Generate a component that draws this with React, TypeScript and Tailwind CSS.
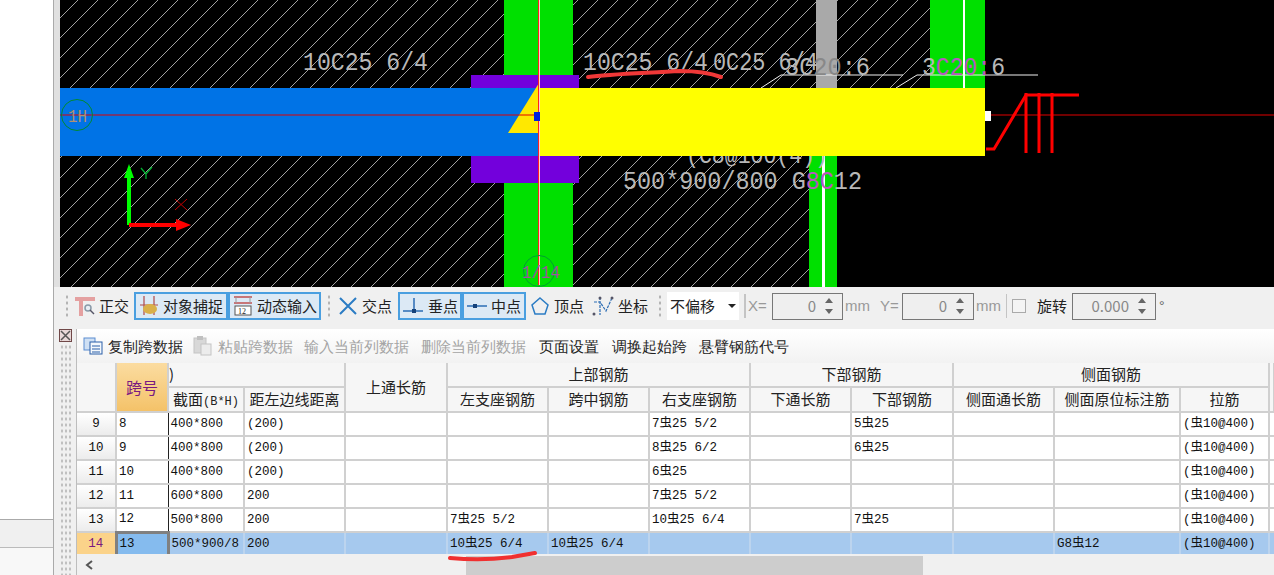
const cad = "'Liberation Mono', monospace"

const rows = [
    ['9', '8', '400*800', '(200)', '', '', '', '7虫25 5/2', '', '5虫25', '', '', '(虫10@400)'],
    ['10', '9', '400*800', '(200)', '', '', '', '8虫25 6/2', '', '6虫25', '', '', '(虫10@400)'],
    ['11', '10', '400*800', '(200)', '', '', '', '6虫25', '', '', '', '', '(虫10@400)'],
    ['12', '11', '600*800', '200', '', '', '', '7虫25 5/2', '', '', '', '', '(虫10@400)'],
    ['13', '12', '500*800', '200', '', '7虫25 5/2', '', '10虫25 6/4', '', '7虫25', '', '', '(虫10@400)'],
    ['14', '13', '500*900/8', '200', '', '10虫25 6/4', '10虫25 6/4', '', '', '', '', 'G8虫12', '(虫10@400)'],
]

const widths = ['w-[39px]', 'w-[52px]', 'w-[76px]', 'w-[101px]', 'w-[102px]', 'w-[101px]', 'w-[101px]', 'w-[101px]', 'w-[101px]', 'w-[102px]', 'w-[101px]', 'w-[126px]', 'w-[89px]', 'w-[5px]']

const CadText = ({ x, y, len, fill = '#b8b8b8', size = 26, children }: { x: number; y: number; len: number; fill?: string; size?: number; children: React.ReactNode }) => (
    <text x={x} y={y} textLength={len} lengthAdjust="spacingAndGlyphs" fill={fill} fontSize={size} fontFamily={cad}>
        {children}
    </text>
)

const Drawing = () => (
    <svg viewBox="60 0 1214 287" width={1214} height={287} className="block">
        <defs>
            <pattern id="hatch" width="20" height="20" patternUnits="userSpaceOnUse" patternTransform="translate(18 0)">
                <path d="M-1 21 L21 -1" stroke="#a0a0a0" strokeWidth="1" />
            </pattern>
        </defs>
        <rect x="60" y="0" width="1214" height="287" fill="#000" />
        <rect x="60" y="0" width="870" height="88" fill="url(#hatch)" />
        <rect x="60" y="156" width="749" height="131" fill="url(#hatch)" />

        {/* columns */}
        <rect x="504" y="0" width="69" height="287" fill="#00e000" />
        <rect x="816" y="0" width="21" height="88" fill="#a9a9a9" />
        <rect x="809" y="156" width="28" height="131" fill="#00e000" />
        <rect x="822" y="156" width="3" height="131" fill="#fff" />
        <rect x="930" y="0" width="55" height="88" fill="#00e000" />
        <rect x="963" y="0" width="2" height="88" fill="#fff" />
        <rect x="471" y="75" width="108" height="108" fill="#7300dc" />

        {/* beams */}
        <rect x="60" y="88" width="480" height="68" fill="#0073e6" />
        <path d="M539 83 L508 133 L540 133 Z" fill="#ffe800" />
        <rect x="538" y="0" width="1" height="285" fill="#ff2020" />
        <rect x="539" y="0" width="1" height="285" fill="#ffd0d0" />
        <path d="M60 115 H534 M985 115 H1274" stroke="#e00000" strokeWidth="1" />
        <rect x="534" y="112" width="6" height="9" fill="#0020e0" />
        <rect x="985" y="111" width="6" height="10" fill="#fff" />

        {/* rebar */}
        <path d="M986 149 H994 L1026 95 H1079" fill="none" stroke="#ff0000" strokeWidth="3" />
        <path d="M1026 93 V153 M1039 93 V153 M1052 93 V153" stroke="#ff0000" strokeWidth="3" />

        {/* leaders */}
        <path d="M761 88 L781 75 H903 M896 88 L917 75 H1038" fill="none" stroke="#f0f0f0" strokeWidth="1" />

        {/* axis bubbles */}
        <circle cx="77" cy="115" r="15.5" fill="none" stroke="#008a30" strokeWidth="1" />
        <CadText x={68} y={122} len={19} size={18} fill="#b09070">1H</CadText>
        <circle cx="539" cy="271" r="15.5" fill="none" stroke="#00a030" strokeWidth="1" />
        <CadText x={522} y={278} len={38} size={18} fill="#a050a0">1/14</CadText>

        {/* cad labels */}
        <CadText x={303} y={70} len={125}>10C25 6/4</CadText>
        <CadText x={583} y={70} len={125}>10C25 6/4</CadText>
        <CadText x={713} y={70} len={105}>0C25 6/4</CadText>
        <CadText x={785} y={75} len={85}>3C<tspan fill="#888">20</tspan>:6</CadText>
        <CadText x={922} y={75} len={83}>3<tspan fill="#b858c0">C20:</tspan>6</CadText>
        <CadText x={686} y={163} len={142} size={24}>(C8@100(4))</CadText>
        <rect x="540" y="88" width="445" height="68" fill="#ffff00" />
        <CadText x={623} y={189} len={239}>500*900/800 G<tspan fill="#b858c0">8C</tspan>12</CadText>

        {/* ucs */}
        <path d="M129 225 V178" stroke="#00ff00" strokeWidth="4" />
        <path d="M129 164 L124 178 H134 Z" fill="#00ff00" />
        <path d="M129 225 H176" stroke="#ff0000" strokeWidth="4" />
        <path d="M191 225 L176 219 V231 Z" fill="#ff0000" />
        <path d="M141 168 L146 174 L152 167 M146 174 V179" fill="none" stroke="#00b030" strokeWidth="1.3" />
        <path d="M175 199 L187 210 M187 199 L175 210" stroke="#c00000" strokeWidth="1" />

        {/* hand marked stroke */}
        <path d="M588 77 C610 74 650 73 680 71 C695 71 710 73 721 77" fill="none" stroke="#f03838" strokeWidth="4" strokeLinecap="round" />
    </svg>
)

const Grip = () => <div className="w-[4px] h-[24px] shrink-0 bg-[radial-gradient(#b4b4b4_1px,transparent_1.2px)] bg-[length:4px_6px]" />

const Tool = ({ icon, label, active, w }: { icon: React.ReactNode; label: string; active?: boolean; w: string }) => (
    <div className={`${w} h-[28px] shrink-0 flex items-center gap-[4px] pl-[3px] text-[15px] text-[#222] ${active ? 'border-2 border-[#4a9fe0] bg-[#dce9f5]' : ''}`}>
        {icon}
        <span className="whitespace-nowrap">{label}</span>
    </div>
)

const Spin = ({ w, value }: { w: string; value: string }) => (
    <div className={`${w} h-[27px] shrink-0 border border-[#777] bg-[#efefef] flex items-center justify-end text-[15px] text-[#888]`}>
        <span>{value}</span>
        <div className="w-[26px] flex flex-col items-center gap-[6px]">
            <svg width="8" height="5" viewBox="0 0 8 5"><path d="M4 0 L8 5 H0 Z" fill="#666" /></svg>
            <svg width="8" height="5" viewBox="0 0 8 5"><path d="M4 5 L8 0 H0 Z" fill="#666" /></svg>
        </div>
    </div>
)

const Toolbar = () => (
    <div className="h-[38px] bg-[#f0f0f0] flex items-center pl-[11px] font-['Noto_Sans_CJK_SC',sans-serif]">
        <Grip />
        <div className="w-[3px]" />
        <Tool w="w-[60px]" label="正交" icon={
            <svg width="20" height="20" viewBox="0 0 20 20" className="shrink-0"><path d="M0 3 H20 M6 3 V20" stroke="#e4a0a0" strokeWidth="4" fill="none" /><circle cx="13" cy="12" r="3" fill="#e8eef4" stroke="#8a9aa8" strokeWidth="1.5" /><path d="M15 14 L19 18" stroke="#556" strokeWidth="1.5" /></svg>
        } />
        <div className="w-[2px]" />
        <Tool w="w-[94px]" active label="对象捕捉" icon={
            <svg width="20" height="22" viewBox="0 0 20 22" className="shrink-0"><path d="M1 10 H19 M5 1 V20 M15 1 V20" stroke="#b04a4a" strokeWidth="1.2" /><ellipse cx="11" cy="14" rx="7" ry="5" fill="#d9b04a" /></svg>
        } />
        <Tool w="w-[93px]" active label="动态输入" icon={
            <svg width="20" height="22" viewBox="0 0 20 22" className="shrink-0"><path d="M1 2 H19 M1 8 H19" stroke="#c05050" strokeWidth="1.5" /><path d="M3 2 V8 M17 2 V8" stroke="#999" /><rect x="2" y="11" width="16" height="9" fill="#fff" stroke="#555" /><text x="5" y="19" fontSize="8" fontFamily="'Liberation Serif', serif" fill="#222">12</text></svg>
        } />
        <div className="w-[6px]" />
        <Grip />
        <div className="w-[4px]" />
        <Tool w="w-[62px]" label="交点" icon={
            <svg width="20" height="20" viewBox="0 0 20 20" className="shrink-0"><path d="M2 2 L18 18 M18 2 L2 18" stroke="#2b7cc4" strokeWidth="2" /></svg>
        } />
        <div className="w-[1px]" />
        <Tool w="w-[64px]" active label="垂点" icon={
            <svg width="21" height="20" viewBox="0 0 21 20" className="shrink-0"><path d="M0 15 H20 M11 2 V15" stroke="#2b6cb4" strokeWidth="1.5" /><rect x="9" y="13" width="4" height="4" fill="#16427a" /></svg>
        } />
        <Tool w="w-[64px]" active label="中点" icon={
            <svg width="20" height="20" viewBox="0 0 20 20" className="shrink-0"><path d="M0 10 H20" stroke="#2b6cb4" strokeWidth="1.5" /><rect x="6" y="8" width="4" height="4" fill="#16427a" /></svg>
        } />
        <div className="w-[1px]" />
        <Tool w="w-[62px]" label="顶点" icon={
            <svg width="20" height="20" viewBox="0 0 20 20" className="shrink-0"><path d="M10 2 L18 9 L15 18 H5 L2 9 Z" fill="none" stroke="#2b7cc4" strokeWidth="1.5" /></svg>
        } />
        <Tool w="w-[69px]" label="坐标" icon={
            <svg width="22" height="22" viewBox="0 0 22 22" className="shrink-0"><path d="M2 7 H8 L14 16 L20 3 M8 2 V20" fill="none" stroke="#2b6cb4" strokeWidth="1.2" strokeDasharray="3 1" /><circle cx="8" cy="3" r="1.5" fill="#556" /><circle cx="20" cy="3" r="1.5" fill="#556" /><circle cx="2" cy="19" r="1.5" fill="#556" /></svg>
        } />
        <Grip />
        <div className="w-[5px]" />
        <div className="w-[72px] h-[28px] shrink-0 bg-white flex items-center pl-[3px] text-[15px] text-[#222]">
            <span className="flex-1">不偏移</span>
            <svg width="8" height="4" viewBox="0 0 8 4" className="mr-[3px]"><path d="M0 0 H8 L4 4 Z" fill="#222" /></svg>
        </div>
        <div className="w-[2px] h-[24px] ml-[5px] mr-[2px] shrink-0 bg-[#c4c4c4]" />
        <span className="w-[24px] shrink-0 text-[15px] text-[#999] font-['Liberation_Sans',sans-serif]">X=</span>
        <Spin w="w-[71px]" value="0" />
        <span className="w-[37px] pl-[2px] shrink-0 text-[15px] text-[#999] font-['Liberation_Sans',sans-serif]">mm</span>
        <span className="w-[22px] shrink-0 text-[15px] text-[#999] font-['Liberation_Sans',sans-serif]">Y=</span>
        <Spin w="w-[72px]" value="0" />
        <span className="w-[32px] pl-[2px] shrink-0 text-[15px] text-[#999] font-['Liberation_Sans',sans-serif]">mm</span>
        <div className="w-[1px] h-[24px] shrink-0 bg-[#c4c4c4]" />
        <div className="w-[14px] h-[14px] ml-[5px] shrink-0 border border-[#aaa] bg-[#f4f4f4]" />
        <span className="ml-[11px] w-[35px] shrink-0 text-[15px] text-[#222]">旋转</span>
        <Spin w="w-[84px]" value="0.000" />
        <span className="ml-[3px] text-[14px] text-[#666] font-['Liberation_Sans',sans-serif]">°</span>
    </div>
)

const CopyIcon = () => (
    <svg width="20" height="18" viewBox="0 0 20 18" className="shrink-0">
        <rect x="1" y="1" width="11" height="12" fill="#cfe0f4" stroke="#5a8cd0" />
        <rect x="7" y="5" width="12" height="12" fill="#f4f8fc" stroke="#2b5fa8" />
        <path d="M9 9 H17 M9 12 H17 M9 15 H17" stroke="#2b5fa8" />
    </svg>
)

const PasteIcon = () => (
    <svg width="20" height="20" viewBox="0 0 20 20" className="shrink-0">
        <rect x="2" y="2" width="12" height="15" fill="#d8d8d8" stroke="#c4c4c4" />
        <rect x="5" y="0" width="6" height="4" fill="#c0c0c0" />
        <rect x="9" y="8" width="10" height="11" fill="#ececec" stroke="#c4c4c4" />
    </svg>
)

const GridMenu = () => (
    <div className="h-[34px] flex items-center pl-[6px] bg-gradient-to-b from-white to-[#f2f2f2] text-[15px] text-[#222] whitespace-nowrap">
        <CopyIcon />
        <span className="ml-[5px] w-[84px]">复制跨数据</span>
        <PasteIcon />
        <span className="ml-[6px] w-[86px] text-[#a4a4a4]">粘贴跨数据</span>
        <span className="w-[117px] text-[#a4a4a4]">输入当前列数据</span>
        <span className="w-[118px] text-[#a4a4a4]">删除当前列数据</span>
        <span className="w-[73px]">页面设置</span>
        <span className="w-[87px]">调换起始跨</span>
        <span>悬臂钢筋代号</span>
    </div>
)

const th = 'border-r-2 border-b-2 border-[#d0d0d0] bg-[#f6f6f6] font-normal text-[15px] text-[#222] text-center p-0 overflow-hidden whitespace-nowrap'

const Grid = () => (
    <table className="table-fixed border-collapse w-[1197px] font-['Liberation_Mono','Noto_Sans_CJK_SC',monospace] text-[12.5px] text-[#111]">
        <colgroup>
            {widths.map((w, i) => <col key={i} className={w} />)}
        </colgroup>
        <thead className="font-['Noto_Sans_CJK_SC',sans-serif]">
            <tr className="h-[24px]">
                <th rowSpan={2} className={th}></th>
                <th rowSpan={2} className="border-r-2 border-b-2 border-[#d0d0d0] bg-gradient-to-b from-[#fbdca0] to-[#f4c268] text-[16px] font-normal text-[#7a1a80] p-0">跨号</th>
                <th colSpan={2} className={`${th} text-left pl-0`}>)</th>
                <th rowSpan={2} className={th}>上通长筋</th>
                <th colSpan={3} className={th}>上部钢筋</th>
                <th colSpan={2} className={th}>下部钢筋</th>
                <th colSpan={3} className={th}>侧面钢筋</th>
                <th rowSpan={2} className={th}></th>
            </tr>
            <tr className="h-[24px]">
                <th className={th}>截面<span className="font-['Liberation_Mono',monospace] text-[12px]">(B*H)</span></th>
                <th className={th}>距左边线距离</th>
                <th className={th}>左支座钢筋</th>
                <th className={th}>跨中钢筋</th>
                <th className={th}>右支座钢筋</th>
                <th className={th}>下通长筋</th>
                <th className={th}>下部钢筋</th>
                <th className={th}>侧面通长筋</th>
                <th className={th}>侧面原位标注筋</th>
                <th className={th}>拉筋</th>
            </tr>
        </thead>
        <tbody>
            {rows.map((row, r) => {
                const selected = r === rows.length - 1
                return (
                    <tr key={row[0]} className={`h-[24px] ${selected ? 'bg-[#a6c9ee]' : 'bg-white'}`}>
                        {row.map((cell, c) => {
                            if (c === 0) {
                                return <td key={c} className={`border-r-2 border-b-2 border-[#d0d0d0] text-center p-0 ${selected ? 'bg-[#fbd38a] text-[#7a1a80]' : 'bg-gradient-to-b from-white to-[#ececec]'}`}>{cell}</td>
                            }
                            if (c === 1 && selected) {
                                return <td key={c} className="border-[3px] border-[#808080] bg-[#85bbee] pl-[2px] p-0 whitespace-nowrap">{cell}</td>
                            }
                            if (c === 1) {
                                return <td key={c} className="border-r border-r-[#222] border-b-2 border-b-[#d0d0d0] pl-[2px] p-0 whitespace-nowrap">{cell}</td>
                            }
                            return (
                                <td key={c} className={`border-r-2 border-b-2 pl-[2px] p-0 whitespace-nowrap overflow-hidden ${selected ? 'border-r-[#bcd4ee] border-b-[#d0d0d0]' : 'border-[#d0d0d0]'}`}>
                                    {cell}
                                </td>
                            )
                        })}
                        <td className="border-b-2 border-[#d0d0d0]"></td>
                    </tr>
                )
            })}
        </tbody>
    </table>
)

const App = () => {
    return (
        <div className="relative w-[1274px] h-[575px] overflow-hidden flex bg-[#f0f0f0]">
            <div className="w-[54px] h-full shrink-0 flex flex-col border-r border-[#aaa]">
                <div className="h-[520px] bg-white border-b border-[#aaa]"></div>
                <div className="h-[28px] bg-[#f0f0f0] border-b border-[#bbb]"></div>
                <div className="flex-1 bg-[#f8f8f8]"></div>
            </div>
            <div className="flex-1 min-w-0 flex flex-col">
                <div className="h-[287px] shrink-0 pl-[6px] bg-[#e0e0e0]">
                    <Drawing />
                </div>
                <Toolbar />
                <div className="flex-1 flex min-h-0 bg-[#f0f0f0] pt-[4px]">
                    <div className="w-[23px] shrink-0 flex flex-col items-center border-r border-[#bdbdbd] pl-[6px] pr-[5px]">
                        <svg width="13" height="13" viewBox="0 0 13 13" className="shrink-0">
                            <rect x="0.5" y="0.5" width="12" height="12" fill="#e8d8d8" stroke="#704848" />
                            <path d="M2 2 L11 11 M11 2 L2 11" stroke="#555" strokeWidth="1.5" />
                        </svg>
                        <div className="w-full flex-1 mt-[2px] bg-[radial-gradient(#c0c0c0_1px,transparent_1.2px)] bg-[length:4px_6px]" />
                    </div>
                    <div className="flex-1 min-w-0 flex flex-col bg-white">
                        <GridMenu />
                        <div className="h-[191px] shrink-0 overflow-hidden">
                            <Grid />
                        </div>
                        <div className="flex-1 bg-[#f0f0f0] flex items-center">
                            <svg width="8" height="10" viewBox="0 0 8 10" className="ml-[8px]"><path d="M7 1 L2 5 L7 9" fill="none" stroke="#555" strokeWidth="2" /></svg>
                            <div className="ml-[373px] w-[457px] h-[19px] mt-[2px] bg-[#cdcdcd]"></div>
                        </div>
                    </div>
                </div>
            </div>
            {/* hand marked stroke on the grid */}
            <svg width="92" height="12" viewBox="0 0 92 12" className="absolute left-[447px] top-[550px]">
                <path d="M3 8 C25 10 50 9 65 7 C75 5 82 4 88 3" fill="none" stroke="#f03030" strokeWidth="4" strokeLinecap="round" />
            </svg>
        </div>
    )
}

export default App
